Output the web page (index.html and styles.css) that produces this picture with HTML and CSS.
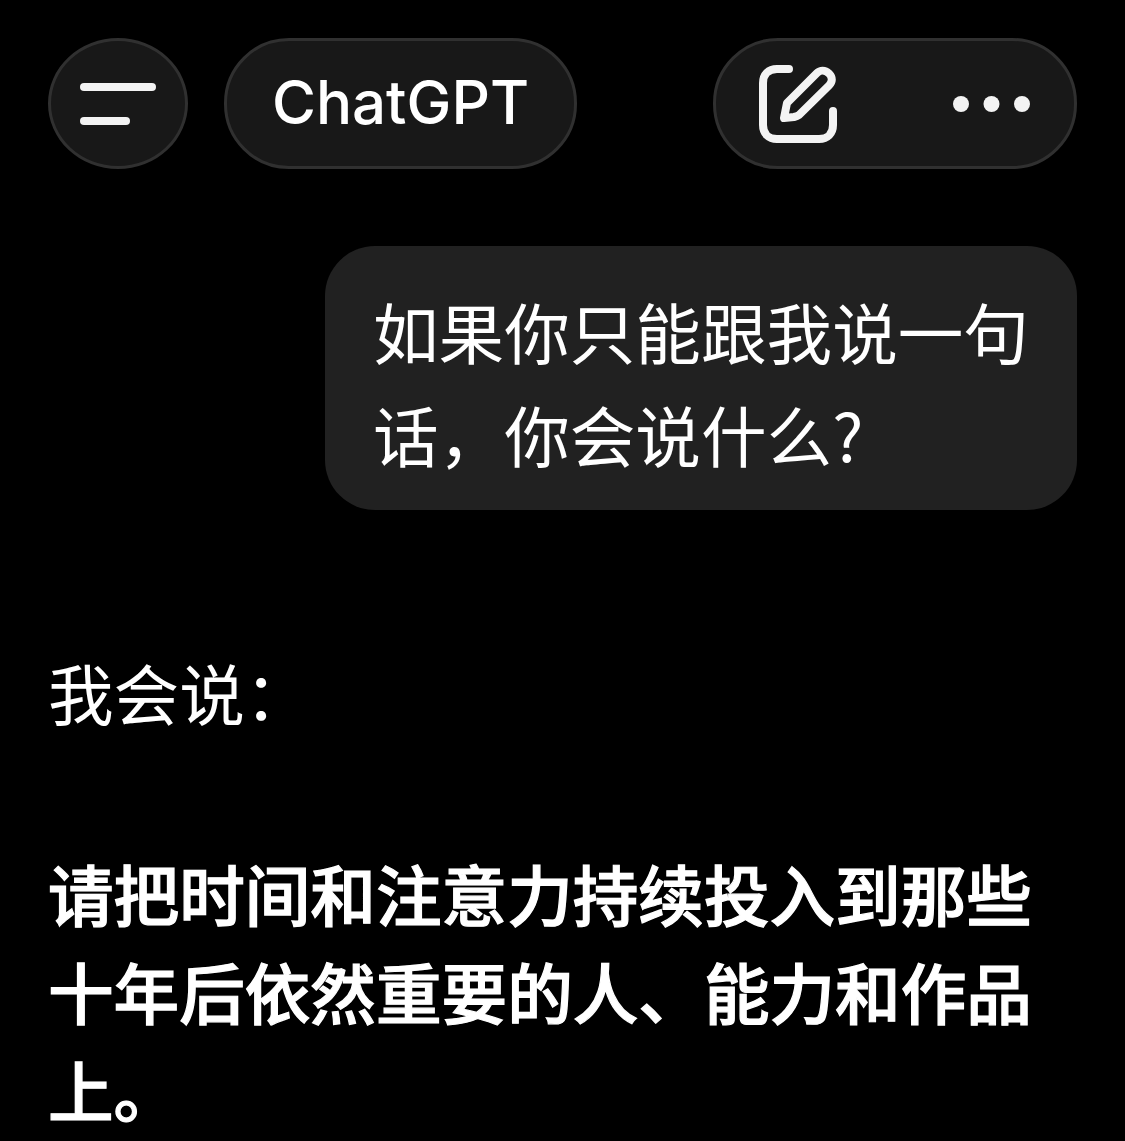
FILE: index.html
```html
<!DOCTYPE html>
<html lang="zh-CN">
<head>
    <meta charset="UTF-8">
    <meta name="viewport" content="width=device-width, initial-scale=1.0">
    <title>ChatGPT</title>
    <link rel="stylesheet" href="styles.css">
</head>
<body>

    <header class="topbar">
        <div class="topbar-left">
            <button class="pill menu-btn" aria-label="菜单">
                <svg class="icon-menu" viewBox="0 0 76 42" width="76" height="42">
                    <line x1="4" y1="4" x2="72" y2="4"/>
                    <line x1="4" y1="38" x2="46" y2="38"/>
                </svg>
            </button>
            <button class="pill title-btn">ChatGPT</button>
        </div>
        <div class="pill actions">
            <svg class="icon-edit" viewBox="0 0 78 78" width="78" height="78">
                <path d="M30 4H18C9.5 4 4 9.5 4 18V60C4 68.500 9.500 74 18 74H60C68.500 74 74 68.500 74 60V46"/>
                <path d="M25 53L28 38L58 8C61 5 66 4.500 70 8.500C74 12.500 73.500 17 70 20.500L40 50C38.500 51 37 51.500 35 52Z"/>
            </svg>
            <svg class="icon-more" viewBox="0 0 77 16" width="77" height="16">
                <circle cx="8" cy="8" r="8"/>
                <circle cx="38.500" cy="8" r="8"/>
                <circle cx="69" cy="8" r="8"/>
            </svg>
        </div>
    </header>

    <main class="chat">
        <div class="user-bubble">如果你只能跟我说一句话，你会说什么?</div>
        <p class="reply-intro">我会说：</p>
        <p class="reply-main">请把时间和注意力持续投入到那些十年后依然重要的人、能力和作品上。</p>
    </main>

</body>
</html>
```

FILE: styles.css
```css
html, body {
    height: 100%;
}

body {
    margin: 0;
    padding: 38px 48px 0;
    box-sizing: border-box;
    background-color: #000;
    color: #fff;
    font-family: "Inter", "Noto Sans CJK SC", sans-serif;
    overflow: hidden;
}

.topbar {
    display: flex;
    justify-content: space-between;
}

.topbar-left {
    display: flex;
    gap: 36px;
}

.pill {
    height: 131px;
    box-sizing: border-box;
    background-color: #181818;
    border: 3px solid #303030;
    border-radius: 65px;
    color: #fff;
    padding: 0;
}

.menu-btn {
    width: 140px;
    border-radius: 50%;
    display: flex;
    align-items: center;
    justify-content: center;
}

.icon-menu line {
    stroke: #f3f3f3;
    stroke-width: 8;
    stroke-linecap: round;
}

.title-btn {
    width: 353px;
    padding-bottom: 3px;
    font-family: inherit;
    font-size: 60px;
    font-weight: 450;
}

.actions {
    width: 364px;
    display: flex;
    align-items: center;
    justify-content: space-between;
    padding: 0 44px 0 43px;
}

.icon-edit path {
    fill: none;
    stroke: #f3f3f3;
    stroke-width: 8;
    stroke-linecap: round;
    stroke-linejoin: round;
}

.icon-more circle {
    fill: #f3f3f3;
}

.chat {
    font-family: "Noto Sans CJK SC", sans-serif;
    font-size: 65.600px;
}

.user-bubble {
    box-sizing: border-box;
    width: 752px;
    margin: 77px 0 0 auto;
    padding: 33px 48px 25px;
    background-color: #212121;
    border-radius: 50px;
    line-height: 103px;
}

.reply-intro {
    margin: 133px 0 0;
    line-height: 98px;
}

.reply-main {
    margin: 103px 0 0;
    font-weight: 500;
    -webkit-text-stroke: 1.2px #fff;
    line-height: 98px;
}
```
